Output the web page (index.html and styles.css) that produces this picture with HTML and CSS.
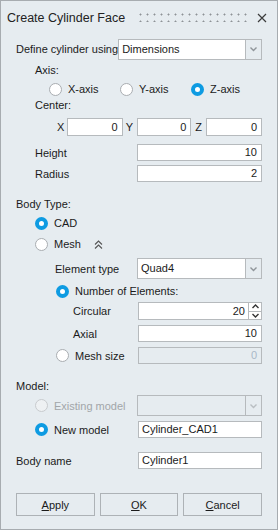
FILE: index.html
```html
<!DOCTYPE html>
<html lang="en">
<head>
    <meta charset="UTF-8">
    <title>Create Cylinder Face</title>
    <link rel="stylesheet" href="styles.css">
</head>
<body>
<div class="dialog">
    <!-- title bar with grip dots and close -->
    <div class="title-bar">
        <span class="title">Create Cylinder Face</span>
        <span class="grip"></span>
        <svg class="close" width="10" height="10" viewBox="0 0 10 10">
            <path d="M1 1 L9 9 M9 1 L1 9" stroke="#3c3c3c" stroke-width="1.2" fill="none"/>
        </svg>
    </div>

    <div class="row row-define">
        <span class="label">Define cylinder using</span>
        <div class="combo combo-define">
            <span class="combo-text">Dimensions</span>
            <span class="combo-btn"><svg width="9" height="6" viewBox="0 0 9 6"><path d="M1.5 1.5 L4.5 4.5 L7.5 1.5" stroke="#8f959a" stroke-width="1.4" fill="none"/></svg></span>
        </div>
    </div>

    <div class="row row-axis-label"><span class="label indent1">Axis:</span></div>
    <div class="row row-axis">
        <span class="opt"><span class="radio"></span><span class="label">X-axis</span></span>
        <span class="opt"><span class="radio"></span><span class="label">Y-axis</span></span>
        <span class="opt"><span class="radio checked"></span><span class="label">Z-axis</span></span>
    </div>

    <div class="row row-center-label"><span class="label indent1">Center:</span></div>
    <div class="row row-xyz">
        <span class="label xyz-l xyz-x">X</span><span class="field field-x">0</span>
        <span class="label xyz-l xyz-y">Y</span><span class="field field-y">0</span>
        <span class="label xyz-l xyz-z">Z</span><span class="field field-z">0</span>
    </div>

    <div class="row row-height">
        <span class="label indent1 grow">Height</span>
        <span class="field field-wide">10</span>
    </div>
    <div class="row row-radius">
        <span class="label indent1 grow">Radius</span>
        <span class="field field-wide">2</span>
    </div>

    <div class="row row-body-type"><span class="label">Body Type:</span></div>
    <div class="row row-cad">
        <span class="radio checked"></span><span class="label">CAD</span>
    </div>
    <div class="row row-mesh">
        <span class="radio"></span><span class="label">Mesh</span>
        <svg class="collapse" width="9" height="10" viewBox="0 0 9 10">
            <path d="M1 4.5 L4.5 1 L8 4.5 M1 8.5 L4.5 5 L8 8.5" stroke="#555" stroke-width="1.1" fill="none"/>
        </svg>
    </div>
    <div class="row row-elem">
        <span class="label indent2 grow">Element type</span>
        <div class="combo combo-wide">
            <span class="combo-text">Quad4</span>
            <span class="combo-btn"><svg width="9" height="6" viewBox="0 0 9 6"><path d="M1.5 1.5 L4.5 4.5 L7.5 1.5" stroke="#8f959a" stroke-width="1.4" fill="none"/></svg></span>
        </div>
    </div>
    <div class="row row-num">
        <span class="radio checked radio-in2"></span><span class="label">Number of Elements:</span>
    </div>
    <div class="row row-circ">
        <span class="label indent3 grow">Circular</span>
        <div class="spin">
            <span class="spin-text">20</span>
            <span class="spin-btns">
                <span class="spin-up"><svg width="9" height="5" viewBox="0 0 9 5"><path d="M1.5 4 L4.5 1 L7.5 4" stroke="#333" stroke-width="1.4" fill="none"/></svg></span>
                <span class="spin-down"><svg width="9" height="5" viewBox="0 0 9 5"><path d="M1.5 1 L4.5 4 L7.5 1" stroke="#333" stroke-width="1.4" fill="none"/></svg></span>
            </span>
        </div>
    </div>
    <div class="row row-axial">
        <span class="label indent3 grow">Axial</span>
        <span class="field field-wide">10</span>
    </div>
    <div class="row row-msize">
        <span class="radio radio-in2"></span><span class="label grow">Mesh size</span>
        <span class="field field-wide disabled">0</span>
    </div>

    <div class="row row-model"><span class="label">Model:</span></div>
    <div class="row row-existing">
        <span class="radio disabled"></span><span class="label muted grow">Existing model</span>
        <div class="combo combo-wide disabled">
            <span class="combo-text"></span>
            <span class="combo-btn"><svg width="9" height="6" viewBox="0 0 9 6"><path d="M1.5 1.5 L4.5 4.5 L7.5 1.5" stroke="#b9bec2" stroke-width="1.4" fill="none"/></svg></span>
        </div>
    </div>
    <div class="row row-new">
        <span class="radio checked"></span><span class="label grow">New model</span>
        <span class="field field-wide left">Cylinder_CAD1</span>
    </div>

    <div class="row row-body-name">
        <span class="label grow">Body name</span>
        <span class="field field-wide left">Cylinder1</span>
    </div>

    <div class="buttons">
        <button class="btn"><u>A</u>pply</button>
        <button class="btn"><u>O</u>K</button>
        <button class="btn"><u>C</u>ancel</button>
    </div>
</div>
</body>
</html>
```

FILE: styles.css
```css
html, body {
    margin: 0;
    padding: 0;
}

body {
    font-family: "Liberation Sans", Arial, sans-serif;
    font-size: 11px;
    color: #1b1b1b;
}

/* the window */
.dialog {
    width: 278px;
    height: 530px;
    box-sizing: border-box;
    border: 1px solid #a7acb0;
    background: #e6ecf0;
    display: flex;
    flex-direction: column;
}

.title-bar {
    height: 33px;
    display: flex;
    align-items: center;
    padding: 0 10px 0 6px;
}

.title {
    font-size: 12.5px;
    color: #222;
}

.grip {
    flex: 1;
    height: 9px;
    margin: 0 7px 0 14px;
    background-image: radial-gradient(circle, #8d9296 0.9px, transparent 1.1px);
    background-size: 7px 7px;
    background-position: -2px -2px;
}

.close {
    margin-top: 1px;
}

/* generic rows */
.row {
    display: flex;
    align-items: center;
    padding: 0 15px;
    flex-shrink: 0;
}

.label {
    white-space: nowrap;
}

.grow {
    flex: 1;
}

.indent1 { margin-left: 19px; }
.indent2 { margin-left: 39px; }
.indent3 { margin-left: 57px; }

.muted { color: #a2a6a9; }

/* text fields */
.field {
    height: 17px;
    box-sizing: border-box;
    border: 1px solid #b6babd;
    background: #fff;
    text-align: right;
    padding: 0 4px;
    line-height: 15px;
}

.field-wide { width: 124px; }
.field.left { text-align: left; padding-left: 3px; }
.field.disabled {
    background: #e6ecf0;
    color: #a9b8c8;
}

/* combo boxes */
.combo {
    height: 21px;
    box-sizing: border-box;
    border: 1px solid #b6babd;
    background: #fff;
    display: flex;
}

.combo-text {
    flex: 1;
    padding-left: 3px;
    line-height: 19px;
}

.combo-btn {
    width: 15px;
    border-left: 1px solid #b6babd;
    background: #e6ecf0;
    display: flex;
    align-items: center;
    justify-content: center;
}

.combo.disabled { background: #e6ecf0; }

.combo-define {
    width: 145px;
    margin-left: auto;
}

.combo-wide { width: 125px; }

/* radio buttons */
.radio {
    width: 13px;
    height: 13px;
    box-sizing: border-box;
    border-radius: 50%;
    border: 1px solid #a9adb1;
    background: #fff;
    margin-right: 6px;
    flex-shrink: 0;
}

.radio.checked {
    border: 4px solid #0e9be2;
}

.radio.disabled {
    border-color: #c8cbce;
    background: #eef1f3;
}

/* row positions */
.row-define { height: 22px; margin-top: 4px; padding-right: 15px; }
.row-axis-label { height: 16px; margin-top: 2px; }
.row-axis { height: 16px; margin-top: 3px; padding-left: 48px; }
.opt {
    width: 73px;
    display: flex;
    align-items: center;
}
.row-center-label { height: 16px; margin-top: 0; }

.row-xyz { height: 18px; margin-top: 5px; padding-left: 0; }
.xyz-l { box-sizing: border-box; }
.xyz-x { width: 66px; padding-left: 56px; }
.xyz-y { width: 14px; padding-left: 3px; }
.xyz-z { width: 15px; padding-left: 4px; }
.row-xyz .field { height: 18px; line-height: 16px; }
.field-x { width: 56px; }
.field-y { width: 55px; }
.field-z { width: 56px; }

.row-height { height: 17px; margin-top: 8px; }
.row-radius { height: 17px; margin-top: 4px; }
.row-height .field,
.row-radius .field { width: 125px; }

.row-body-type { height: 16px; margin-top: 14px; }
.row-cad { height: 16px; margin-top: 3px; padding-left: 34px; }
.row-mesh { height: 16px; margin-top: 5px; padding-left: 34px; }
.collapse { margin-left: 13px; margin-top: 1px; }

.row-elem { height: 21px; margin-top: 6px; }
.row-num { height: 16px; margin-top: 4px; }
.radio-in2 { margin-left: 40px; }

.row-circ { height: 18px; margin-top: 3px; }
.spin {
    width: 124px;
    height: 18px;
    box-sizing: border-box;
    border: 1px solid #b6babd;
    background: #fff;
    display: flex;
}
.spin-text {
    flex: 1;
    text-align: right;
    padding-right: 3px;
    line-height: 16px;
}
.spin-btns {
    width: 12px;
    border-left: 1px solid #b6babd;
    display: flex;
    flex-direction: column;
}
.spin-up, .spin-down {
    flex: 1;
    display: flex;
    align-items: center;
    justify-content: center;
}
.spin-up { border-bottom: 1px solid #b6babd; }

.row-axial { height: 17px; margin-top: 5px; }
.row-msize { height: 17px; margin-top: 5px; }

.row-model { height: 16px; margin-top: 14px; }
.row-existing { height: 21px; margin-top: 1px; padding-left: 34px; }
.row-new { height: 17px; margin-top: 5px; padding-left: 34px; }
.row-body-name { height: 17px; margin-top: 14px; }

/* bottom buttons */
.buttons {
    display: flex;
    gap: 5px;
    padding: 0 15px;
    margin-top: 24px;
}

.btn {
    flex: 1;
    height: 23px;
    border: 1px solid #adb2b6;
    background: #e6ecf0;
    font-family: "Liberation Sans", Arial, sans-serif;
    font-size: 11px;
    color: #1b1b1b;
    padding: 0;
}
```
